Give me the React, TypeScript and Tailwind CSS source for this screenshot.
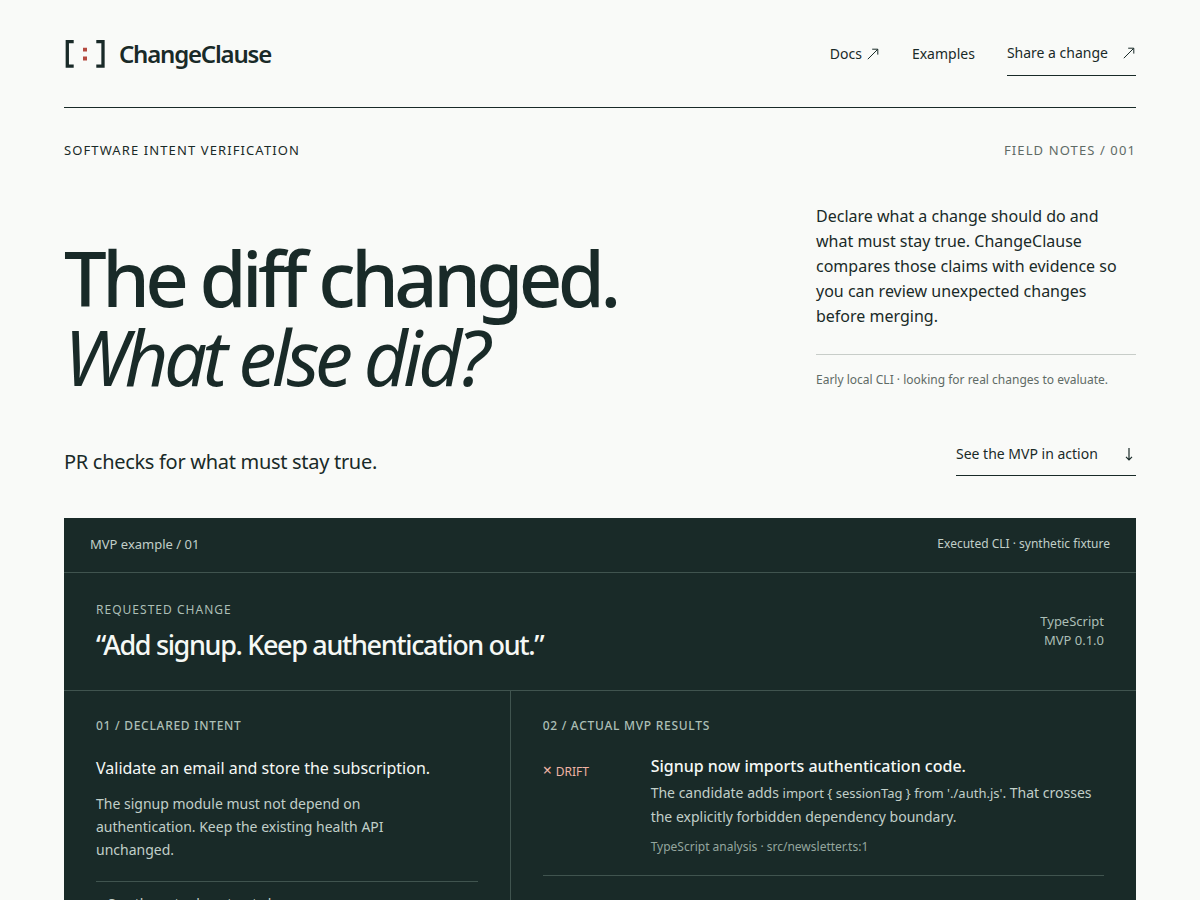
import type { ReactNode } from "react";

function ArrowUpRight() {
  return (
    <svg width="14" height="14" viewBox="0 0 14 14" fill="none" stroke="currentColor" aria-hidden="true">
      <path d="M1.8 12.2L11.6 2.4M6.2 2.2H11.8V7.6" />
    </svg>
  );
}

function ArrowDown() {
  return (
    <svg width="14" height="14" viewBox="0 0 14 14" fill="none" stroke="currentColor" strokeWidth="1.2" aria-hidden="true">
      <path d="M7 1V12.5M4 9.8L7 12.8L10 9.8" />
    </svg>
  );
}

function Logo() {
  return (
    <a href="#" className="flex items-center gap-3">
      <svg width="43" height="32" viewBox="0 0 43 32" fill="none" aria-hidden="true">
        <path d="M9.7 3.7H3.3V28.1H9.7M32.3 3.7H39V28.1H32.3" stroke="#192a28" strokeWidth="3.3" />
        <path d="M19 9.8H23V13.6H19ZM19 18.6H23V22.4H19Z" fill="#b54a40" />
      </svg>
      <span className="text-2xl font-semibold tracking-tighter">ChangeClause</span>
    </a>
  );
}

function Finding({ status, title, source, children }: { status: string; title: string; source: string; children: ReactNode }) {
  return (
    <article className="grid grid-cols-[92px_1fr] gap-4 border-b border-[#40544f] pb-5">
      <p className="mt-1 text-xs leading-6 text-[#f0b3a4]">
        <span className="mr-1 text-base leading-6" aria-hidden="true">×</span>
        {status}
      </p>
      <div>
        <h3 className="text-base font-medium text-[#f5f8f5]">{title}</h3>
        <p className="mt-[3px] text-sm leading-[23px] text-[#c1cfc8]">{children}</p>
        <p className="mt-[11px] text-xs leading-4 text-[#94a69e]">{source}</p>
      </div>
    </article>
  );
}

export default function App() {
  return (
    <div className="h-screen overflow-hidden bg-[#f9faf8] px-16 font-['Noto_Sans',sans-serif] text-[#192a28]">
      <header className="flex items-center justify-between border-b border-[#192a28] pt-8 pb-[31px]">
        <Logo />
        <nav className="flex items-center gap-8 text-sm">
          <a href="#docs" className="flex items-center gap-1">
            Docs <ArrowUpRight />
          </a>
          <a href="#examples">Examples</a>
          <a href="#share" className="flex min-h-11 items-center gap-[14px] border-b border-[#192a28] pb-0.5">
            Share a change <ArrowUpRight />
          </a>
        </nav>
      </header>

      <main>
        <div className="flex justify-between pt-8 text-[13px] leading-5 tracking-[0.085em] uppercase">
          <p>Software intent verification</p>
          <p className="text-[#5f6b66]">Field notes / 001</p>
        </div>

        <section className="mt-11 grid grid-cols-[1fr_320px] items-end gap-16">
          <h1 className="text-[76px] leading-[79px] font-medium tracking-[-0.06em]">
            The diff changed.
            <br />
            <em className="font-normal">What else did?</em>
          </h1>
          <div className="pb-2">
            <p className="text-base leading-[25px]">
              Declare what a change should do and what must stay true. ChangeClause compares those claims with evidence so
              you can review unexpected changes before merging.
            </p>
            <p className="mt-[25px] border-t border-[#c8cdc9] pt-[17px] text-xs leading-4 text-[#5f6b66]">
              Early local CLI · looking for real changes to evaluate.
            </p>
          </div>
        </section>

        <div className="mt-9 flex items-end justify-between">
          <p className="text-xl tracking-[-0.015em]">PR checks for what must stay true.</p>
          <a
            href="#mvp"
            className="flex min-h-11 w-[180px] items-center justify-between border-b border-[#192a28] text-sm"
          >
            See the MVP in action <ArrowDown />
          </a>
        </div>

        <section id="mvp" className="mt-[42px] bg-[#192a28] text-[#c1cfc8]">
          <div className="flex items-center justify-between border-b border-[#40544f] px-[26px] pt-[15px] pb-[17px]">
            <p className="text-[13px] leading-[22px]">MVP example / 01</p>
            <p className="text-xs">Executed CLI · synthetic fixture</p>
          </div>

          <div className="flex items-center justify-between border-b border-[#40544f] px-8 py-7">
            <div>
              <p className="text-xs leading-[17px] tracking-[0.085em] text-[#acbfb6] uppercase">Requested change</p>
              <h2 className="mt-[9px] text-[27px] leading-[35px] font-medium tracking-tighter text-[#f5f8f5]">
                “Add signup. Keep authentication out.”
              </h2>
            </div>
            <p className="pb-0.5 text-right text-[13px] leading-[19px] text-[#acbfb6]">
              TypeScript
              <br />
              MVP 0.1.0
            </p>
          </div>

          <div className="grid grid-cols-[5fr_7fr]">
            <div className="border-r border-[#40544f] px-8 pt-[27px] pb-8">
              <p className="text-xs leading-4 font-medium tracking-[0.06em] text-[#acbfb6] uppercase">
                01 / Declared intent
              </p>
              <h3 className="mt-[22px] text-base text-[#f5f8f5]">Validate an email and store the subscription.</h3>
              <p className="mt-3 max-w-80 text-sm leading-[23px]">
                The signup module must not depend on authentication. Keep the existing health API unchanged.
              </p>
              <details className="mt-5 border-t border-[#40544f] pt-3 text-sm">
                <summary className="list-none">+ See the actual contract clause</summary>
              </details>
            </div>
            <div className="px-8 pt-[27px] pb-8">
              <p className="mb-5 text-xs leading-4 font-medium tracking-[0.06em] text-[#acbfb6] uppercase">
                02 / Actual MVP results
              </p>
              <Finding
                status="DRIFT"
                title="Signup now imports authentication code."
                source="TypeScript analysis · src/newsletter.ts:1"
              >
                The candidate adds{" "}
                <code className="font-['Noto_Sans',sans-serif] text-[13px]">{"import { sessionTag } from './auth.js'"}</code>. That
                crosses the explicitly forbidden dependency boundary.
              </Finding>
            </div>
          </div>
        </section>
      </main>
    </div>
  );
}
